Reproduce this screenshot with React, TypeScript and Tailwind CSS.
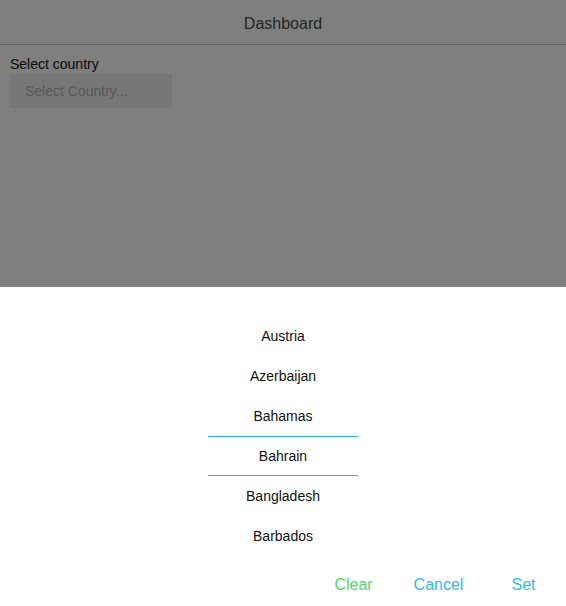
import { useState } from "react";

const countries = ["Austria", "Azerbaijan", "Bahamas", "Bahrain", "Bangladesh", "Barbados"];

const App = () => {
  const [selected] = useState("Bahrain");

  return (
    <div className="relative w-full h-[606px] bg-white overflow-hidden font-['Liberation_Sans',Arial,sans-serif]">
      {/* header */}
      <div className="h-[45px] border-b border-[#c8c8c8] flex items-center justify-center pt-[4px]">
        <h1 className="text-[16px] text-[#4a4a4a]">Dashboard</h1>
      </div>

      {/* page content */}
      <div className="px-[10px] pt-[11px]">
        <label className="block text-[14px] leading-[16px] text-[#111]">Select country</label>
        <input
          readOnly
          placeholder="Select Country..."
          className="mt-[2px] w-[162px] h-[34px] bg-[#eeeeee] px-[15px] text-[14px] placeholder:text-[#b0b0b0] outline-none"
        />
      </div>

      {/* overlay */}
      <div className="absolute inset-0 bg-black/50"></div>

      {/* picker sheet */}
      <div className="absolute left-0 right-0 bottom-0 h-[319px] bg-white flex flex-col">
        <div className="pt-[29px] flex flex-col items-center">
          {countries.map((c) => (
            <div
              key={c}
              className={
                c === selected
                  ? "w-[150px] h-[40px] flex items-center justify-center text-[14px] text-[#111] border-y border-[#21b9ea]"
                  : "w-[150px] h-[40px] flex items-center justify-center text-[14px] text-[#111]"
              }
            >
              {c}
            </div>
          ))}
        </div>
        <div className="flex-1 flex justify-end items-center pt-[8px]">
          <button className="w-[85px] text-[16px] text-[#4cd964]">Clear</button>
          <button className="w-[85px] text-[16px] text-[#2cbcf0]">Cancel</button>
          <button className="w-[85px] text-[16px] text-[#2cbcf0]">Set</button>
        </div>
      </div>
    </div>
  );
};

export default App;
